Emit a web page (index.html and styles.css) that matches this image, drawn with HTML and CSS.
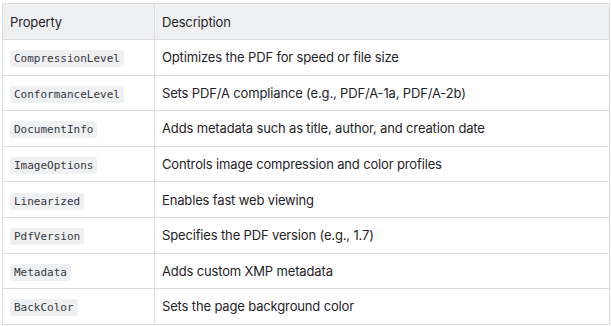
FILE: index.html
```html
<!DOCTYPE html>
<html>
<head>
<meta charset="utf-8">
<link rel="stylesheet" href="styles.css">
</head>
<body>
<div class="wrap">
<table class="props">
  <thead>
    <tr><th class="c1">Property</th><th>Description</th></tr>
  </thead>
  <tbody>
    <tr><td><code>CompressionLevel</code></td><td>Optimizes the PDF for speed or file size</td></tr>
    <tr><td><code>ConformanceLevel</code></td><td>Sets PDF/A compliance (e.g., PDF/A-1a, PDF/A-2b)</td></tr>
    <tr><td><code>DocumentInfo</code></td><td>Adds metadata such as title, author, and creation date</td></tr>
    <tr><td><code>ImageOptions</code></td><td>Controls image compression and color profiles</td></tr>
    <tr><td><code>Linearized</code></td><td>Enables fast web viewing</td></tr>
    <tr><td><code>PdfVersion</code></td><td>Specifies the PDF version (e.g., 1.7)</td></tr>
    <tr><td><code>Metadata</code></td><td>Adds custom XMP metadata</td></tr>
    <tr><td><code>BackColor</code></td><td>Sets the page background color</td></tr>
  </tbody>
</table>
</div>
</body>
</html>
```
FILE: styles.css
```css
html, body {
  margin: 0;
  padding: 0;
  background: #ffffff;
}
.wrap {
  padding: 3px 2px 0 2px;
}
.props {
  border-collapse: collapse;
  width: 608px;
  font-family: Inter, "Noto Sans", sans-serif;
  font-size: 13px;
  letter-spacing: -0.15px;
  color: #1f2328;
}
.props th, .props td {
  border: 1px solid #dcdcdc;
  padding: 0 7px;
  text-align: left;
  vertical-align: middle;
  font-weight: 400;
  line-height: 18px;
}
.props th {
  background: #eff0f2;
  height: 35px;
}
.props td {
  height: 34.6px;
}
.props .c1 {
  width: 137px;
}
.props code {
  font-family: "DejaVu Sans Mono", monospace;
  font-size: 11px;
  letter-spacing: 0;
  background: #eff0f2;
  color: #333840;
  border-radius: 3px;
  padding: 2px 4px;
  line-height: 12px;
}
```
